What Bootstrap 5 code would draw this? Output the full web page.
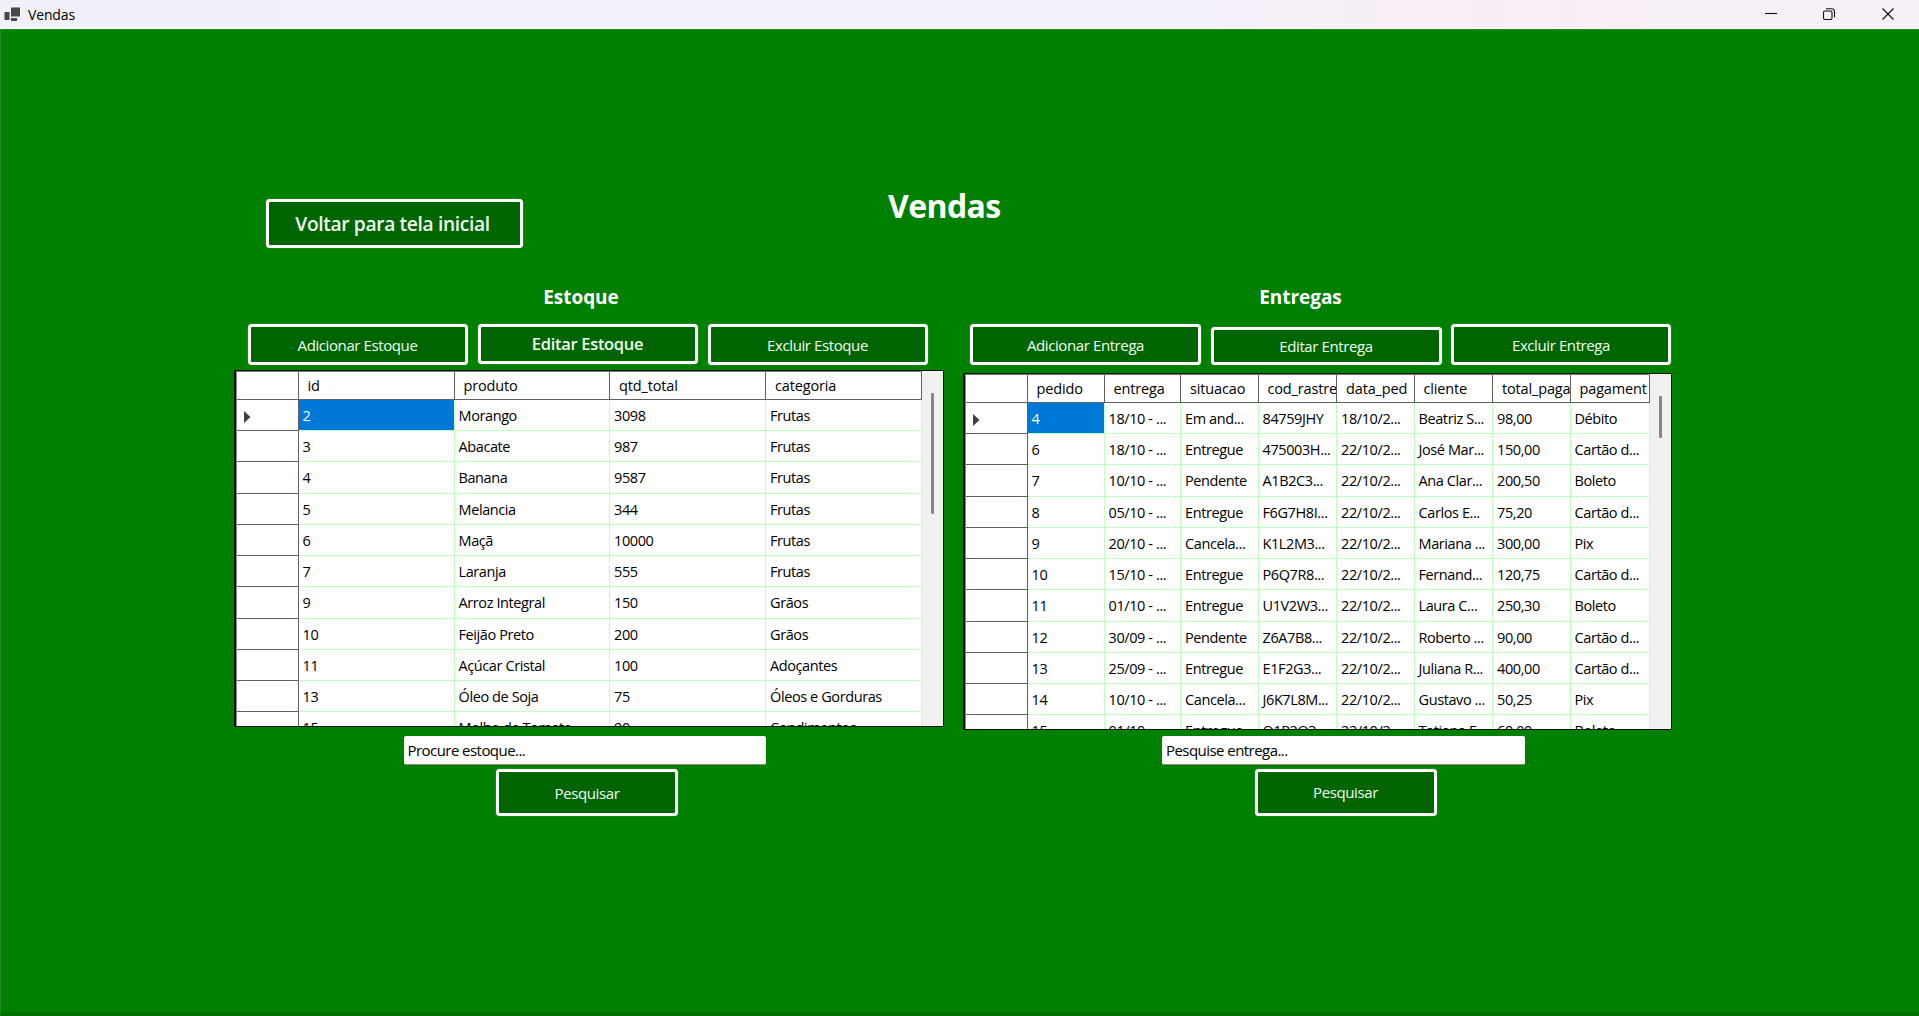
<!DOCTYPE html>
<html lang="pt-BR">
<head>
<meta charset="utf-8">
<meta name="viewport" content="width=device-width, initial-scale=1">
<title>Vendas</title>
<link href="https://cdn.jsdelivr.net/npm/bootstrap@5.3.0/dist/css/bootstrap.min.css" rel="stylesheet">
<style>
  body { height: 1016px; overflow: hidden; background: #008000; color: #000; font-family: "Open Sans", "Noto Sans", sans-serif; font-size: 14.5px; letter-spacing: -.4px; line-height: 20px; }
  .titlebar { height: 29px; background: linear-gradient(90deg, #f1f0f8 0%, #f3f0f9 60%, #f9edf6 80%, #f6eff7 88%); font-size: 14px; letter-spacing: -.15px; padding-left: 4px; }
  .form-area { height: 987px; border-left: 1px solid #1f8f1f; border-top: 1px solid #1f8f1f; border-bottom: 4px solid #007000; padding: 164px 0 0 233px; }
  .btn-venda { --bs-btn-color: #fff; --bs-btn-bg: #006400; --bs-btn-border-color: #fff; --bs-btn-hover-color: #fff; --bs-btn-hover-bg: #007400; --bs-btn-hover-border-color: #fff; --bs-btn-border-width: 3px; --bs-btn-border-radius: 4px; --bs-btn-padding-x: 0; --bs-btn-padding-y: 0; --bs-btn-font-size: 15px; --bs-btn-font-weight: 500; --bs-btn-line-height: 20px; height: 41px; width: 220px; color: #f0fff0; letter-spacing: -.4px; box-shadow: 0 0 1px #cfd8cf; }
  .top-row { height: 116px; }
  .btn-back { width: 257px; height: 49px; margin: 5px 0 0 32px; --bs-btn-font-size: 19.2px; --bs-btn-font-weight: 600; letter-spacing: -.35px; padding: 1px 4px 0 0; }
  .page-title { margin: -9px 0 0 365px; font-size: 32px; font-weight: 700; line-height: 42px; letter-spacing: -.6px; }
  .panel-title { font-size: 19px; font-weight: 700; letter-spacing: -.05px; line-height: 26px; height: 40px; margin: 0; }
  .panel-stock, .panel-delivery { margin-top: -26px; }
  .panel-stock { width: 710px; }
  .panel-delivery { width: 709px; margin-left: 19px; }
  .tools { height: 46px; gap: 10px; }
  .tools-stock { padding-left: 13.5px; }
  .tools-delivery { padding-left: 7px; height: 49px; gap: 9.5px; }
  .btn-edit-stock { height: 39.5px; --bs-btn-font-size: 16.5px; --bs-btn-font-weight: 600; letter-spacing: -.3px; }
  .btn-wide { width: 231px; }
  .btn-edit-delivery { height: 38.5px; margin-top: 2.5px; }
  .grid-box { height: 357px; border: 1px solid #111; border-left-width: 2px; background: #fff; overflow: hidden; }
  .grid-inner { border-left: 1px solid #8a8a8a; border-top: 1px solid #777; }
  .grid-scroll { width: 21px; background: #f0f0f0; }
  .thumb { width: 2.5px; background: #868686; margin-left: 9px; border-radius: 1px; }
  .g-row { display: grid; height: 31.22px; }
  .g-head { height: 28px; }
  .g-head > div { border-right: 1px solid #606060; border-bottom: 1px solid #606060; padding: 4px 0 0 9px; letter-spacing: -.15px; overflow: hidden; white-space: nowrap; }
  .g-cell { border-right: 1px solid #c0ffc0; border-bottom: 1px solid #c0ffc0; padding: 6px 0 0 4px; overflow: hidden; white-space: nowrap; }
  .g-mark { border-right: 1px solid #606060; border-bottom: 1px solid #606060; padding: 11px 0 0 6px; line-height: 0; }
  .g-cell.picked { background: #0078d7; color: #fff; }
  .stock-cols { grid-template-columns: 61.500px 156px 155.5px 156px 155.5px; }
  .delivery-cols { grid-template-columns: 61.500px 77px 76.5px 77.5px 78.5px 77.5px 78.5px 77.5px 79px; }
  .search-area { width: 362.5px; }
  .search-stock { margin: 9px 0 0 169.5px; }
  .search-delivery { margin: 6px 0 0 199px; }
  .search-input { height: 28.5px; border: 0; border-bottom: 1px solid #868686; border-radius: 2px; padding: 0 4px 0; color: #000; font-size: 15px; line-height: 20px; letter-spacing: -.55px; background: #fff; }
  .btn-search { width: 182px; height: 47px; margin: 4.5px 0 0 92.5px; }
</style>
<script src="https://cdn.jsdelivr.net/npm/bootstrap@5.3.0/dist/js/bootstrap.bundle.min.js"></script>
</head>
<body>
<header class="titlebar d-flex align-items-center">
  <svg width="17" height="16" viewBox="0 0 17 16"><path fill="#484848" d="M7 .5h9v9H7zM.5 5h5v8h-5zM7 11h6v3H7z"/></svg>
  <span class="ms-2" style="margin-left:7px!important">Vendas</span>
  <div class="d-flex ms-auto align-items-center">
    <svg width="154" height="29" viewBox="0 0 154 29" fill="none" stroke="#111" stroke-width="1.1">
      <path d="M0 13.500h12"/>
      <rect x="58.500" y="11" width="8.500" height="8.500" rx="1.500"/><path d="M61 8.700h5.500q3 0 3 3v5.500"/>
      <path d="M117.500 8.500l11 11M128.500 8.500l-11 11"/>
    </svg>
  </div>
</header>

<main class="form-area">
  <div class="top-row d-flex align-items-start">
    <button class="btn btn-venda btn-back">Voltar para tela inicial</button>
    <h1 class="page-title text-white">Vendas</h1>
  </div>
  <div class="d-flex align-items-start">
    <section class="panel-stock">
      <h2 class="panel-title text-white text-center pe-3">Estoque</h2>
      <div class="tools tools-stock d-flex align-items-start">
        <button class="btn btn-venda">Adicionar Estoque</button>
        <button class="btn btn-venda btn-edit-stock">Editar Estoque</button>
        <button class="btn btn-venda">Excluir Estoque</button>
      </div>
      <div class="grid-box d-flex">
        <div class="grid-inner flex-grow-1" id="stock"></div>
        <div class="grid-scroll"><div class="thumb" style="margin-top:22px;height:121px"></div></div>
      </div>
      <div class="search-area search-stock">
        <input class="form-control search-input" value="Procure estoque...">
        <button class="btn btn-venda btn-search">Pesquisar</button>
      </div>
    </section>
    <section class="panel-delivery">
      <h2 class="panel-title text-white text-center" style="padding-right:34px">Entregas</h2>
      <div class="tools tools-delivery d-flex align-items-start">
        <button class="btn btn-venda btn-wide">Adicionar Entrega</button>
        <button class="btn btn-venda btn-wide btn-edit-delivery">Editar Entrega</button>
        <button class="btn btn-venda">Excluir Entrega</button>
      </div>
      <div class="grid-box d-flex">
        <div class="grid-inner flex-grow-1" id="delivery"></div>
        <div class="grid-scroll"><div class="thumb" style="margin-top:22px;height:42px"></div></div>
      </div>
      <div class="search-area search-delivery">
        <input class="form-control search-input" value="Pesquise entrega...">
        <button class="btn btn-venda btn-search" style="margin-top:4px">Pesquisar</button>
      </div>
    </section>
  </div>
</main>

<script>
const stock = `id|produto|qtd_total|categoria
2|Morango|3098|Frutas
3|Abacate|987|Frutas
4|Banana|9587|Frutas
5|Melancia|344|Frutas
6|Maçã|10000|Frutas
7|Laranja|555|Frutas
9|Arroz Integral|150|Grãos
10|Feijão Preto|200|Grãos
11|Açúcar Cristal|100|Adoçantes
13|Óleo de Soja|75|Óleos e Gorduras
15|Molho de Tomate|90|Condimentos`;
const delivery = `pedido|entrega|situacao|cod_rastre|data_ped|cliente|total_paga|pagament
4|18/10 - ...|Em and...|84759JHY|18/10/2...|Beatriz S...|98,00|Débito
6|18/10 - ...|Entregue|475003H...|22/10/2...|José Mar...|150,00|Cartão d...
7|10/10 - ...|Pendente|A1B2C3...|22/10/2...|Ana Clar...|200,50|Boleto
8|05/10 - ...|Entregue|F6G7H8I...|22/10/2...|Carlos E...|75,20|Cartão d...
9|20/10 - ...|Cancela...|K1L2M3...|22/10/2...|Mariana ...|300,00|Pix
10|15/10 - ...|Entregue|P6Q7R8...|22/10/2...|Fernand...|120,75|Cartão d...
11|01/10 - ...|Entregue|U1V2W3...|22/10/2...|Laura C...|250,30|Boleto
12|30/09 - ...|Pendente|Z6A7B8...|22/10/2...|Roberto ...|90,00|Cartão d...
13|25/09 - ...|Entregue|E1F2G3...|22/10/2...|Juliana R...|400,00|Cartão d...
14|10/10 - ...|Cancela...|J6K7L8M...|22/10/2...|Gustavo ...|50,25|Pix
15|01/10 - ...|Entregue|O1P2Q3...|22/10/2...|Tatiana F...|60,00|Boleto`;
const arrow = '<svg width="8" height="12" viewBox="0 0 8 12"><path fill="#404040" d="M1 0l6.500 6L1 12z"/></svg>';
function fill(id, text) {
  const [head, ...rows] = text.split('\n').map(r => r.split('|'));
  document.getElementById(id).innerHTML =
    `<div class="g-row g-head ${id}-cols"><div></div>${head.map(h => `<div>${h}</div>`).join('')}</div>` +
    rows.map((r, i) => `<div class="g-row ${id}-cols"><div class="g-mark">${i ? '' : arrow}</div>` +
      r.map((c, j) => `<div class="g-cell${i + j ? '' : ' picked'}">${c}</div>`).join('') + '</div>').join('');
}
fill('stock', stock);
fill('delivery', delivery);
</script>
</body>
</html>
